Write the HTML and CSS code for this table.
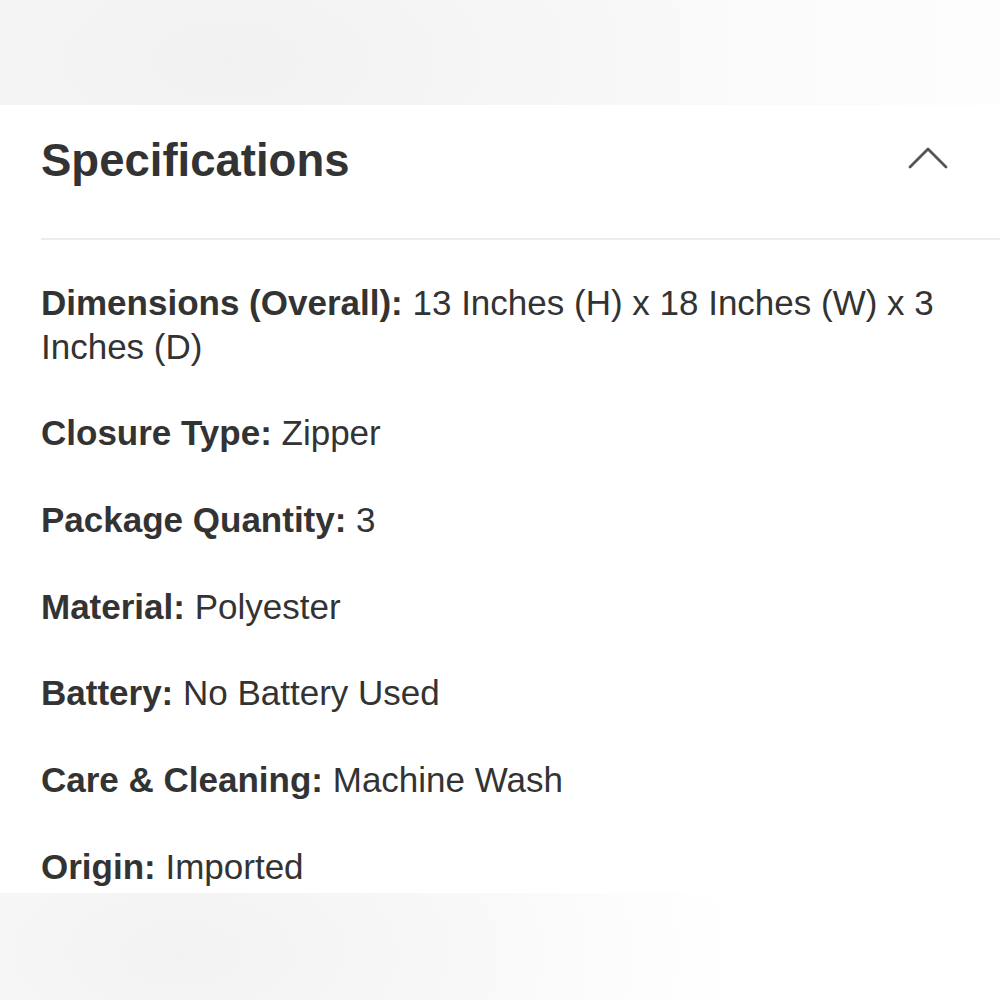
FILE: index.html
```html
<!DOCTYPE html>
<html lang="en">
<head>
<meta charset="utf-8">
<title>Specifications</title>
<link rel="stylesheet" href="styles.css">
</head>
<body>
<div class="page">
  <div class="band band-top"></div>
  <section class="panel">
    <header class="panel-head">
      <h2 class="title">Specifications</h2>
      <svg class="chevron" width="40" height="24" viewBox="0 0 40 24" aria-hidden="true">
        <path d="M2 21 L20 3 L38 21" fill="none" stroke="#555" stroke-width="2.8" stroke-linecap="round" stroke-linejoin="round"/>
      </svg>
    </header>
    <div class="divider"></div>
    <ul class="specs">
      <li><b>Dimensions (Overall):</b> 13 Inches (H) x 18 Inches (W) x 3 Inches (D)</li>
      <li><b>Closure Type:</b> Zipper</li>
      <li><b>Package Quantity:</b> 3</li>
      <li><b>Material:</b> Polyester</li>
      <li><b>Battery:</b> No Battery Used</li>
      <li><b>Care &amp; Cleaning:</b> Machine Wash</li>
      <li><b>Origin:</b> Imported</li>
    </ul>
  </section>
  <div class="band band-bottom"></div>
</div>
</body>
</html>
```

FILE: styles.css
```css
html, body {
  margin: 0;
  padding: 0;
  background: #ffffff;
}
body {
  font-family: "Liberation Sans", Arial, Helvetica, sans-serif;
  color: #333333;
}
.page {
  width: 1000px;
  height: 1000px;
  display: flex;
  flex-direction: column;
  overflow: hidden;
}
.band {
  flex: none;
}
.band-top {
  height: 105px;
  background:
    radial-gradient(ellipse 520px 260px at 230px 60px, #f1f1f1 0%, rgba(245,245,245,0.6) 55%, rgba(255,255,255,0) 100%),
    linear-gradient(90deg, #f4f4f4 0%, #f8f8f8 50%, #fdfdfd 100%);
}
.band-bottom {
  flex: 1;
  background:
    radial-gradient(ellipse 560px 300px at 180px 60px, #f2f2f2 0%, rgba(246,246,246,0.7) 55%, rgba(255,255,255,0) 100%),
    #ffffff;
}
.panel {
  background: #ffffff;
  padding-left: 41px;
  padding-top: 30px;
  padding-bottom: 5px;
}
.panel-head {
  display: flex;
  align-items: center;
  justify-content: space-between;
  padding-right: 52px;
}
.title {
  margin: 0;
  font-size: 45.5px;
  font-weight: 700;
  line-height: 52px;
  color: #333333;
}
.chevron {
  display: block;
  margin-top: -6px;
}
.divider {
  height: 2px;
  background: #ececec;
  margin-top: 51px;
}
.specs {
  list-style: none;
  margin: 41px 0 0 0;
  padding: 0 40px 0 0;
  font-size: 35px;
  line-height: 43.5px;
}
.specs li {
  margin-bottom: 43.2px;
}
.specs li:last-child {
  margin-bottom: 0;
}
.specs b {
  font-weight: 700;
}
```
